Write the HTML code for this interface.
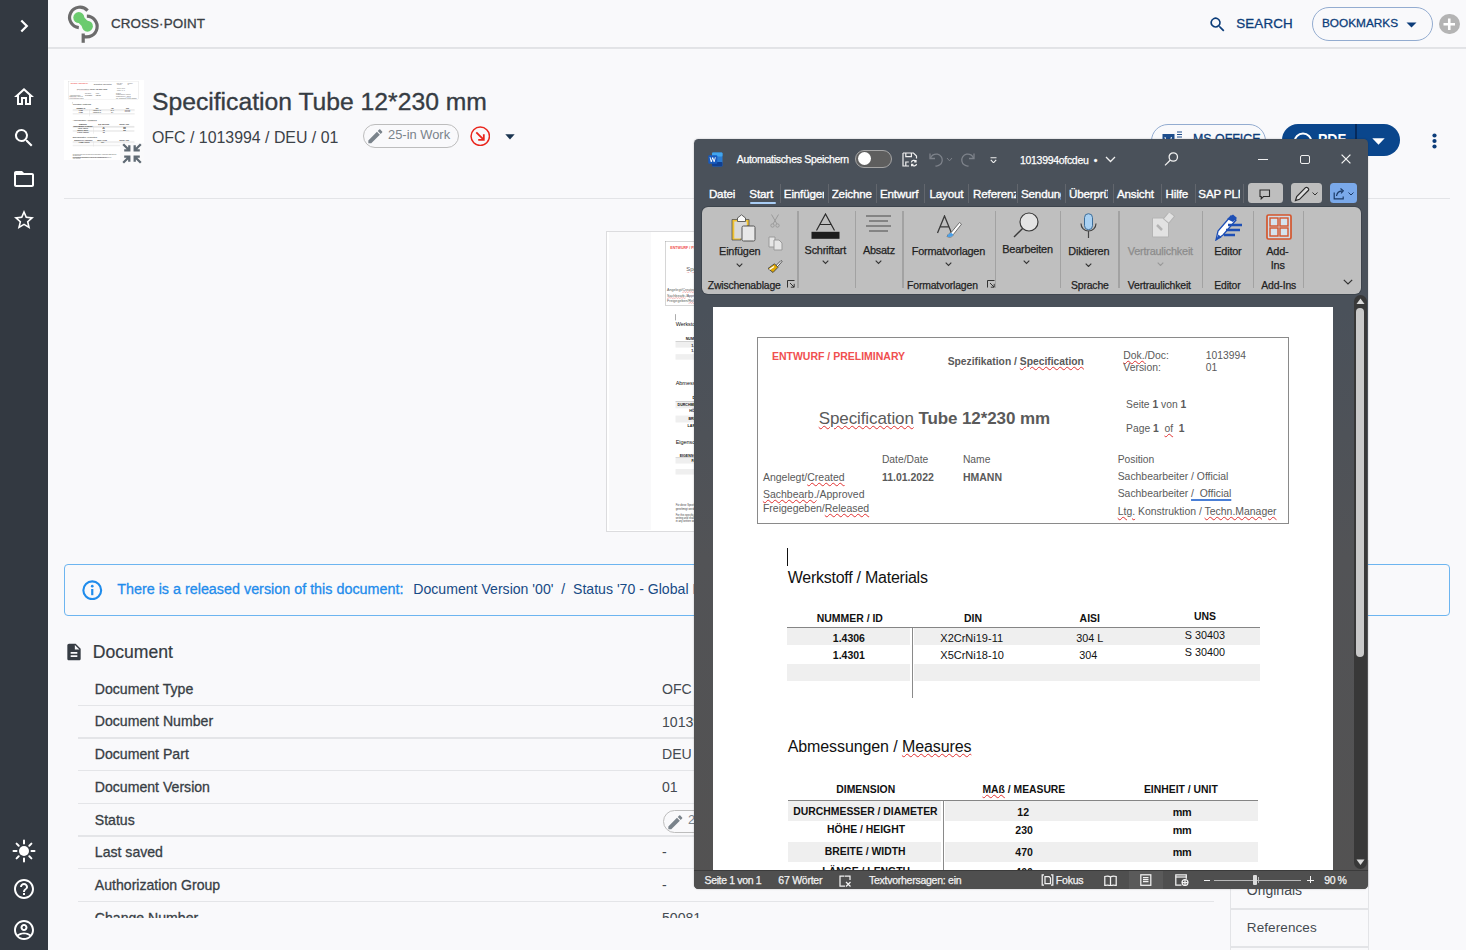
<!DOCTYPE html>
<html><head><meta charset="utf-8">
<style>
*{margin:0;padding:0;box-sizing:border-box}
html,body{width:1466px;height:950px;overflow:hidden;background:#f9f9fb;font-family:"Liberation Sans",sans-serif;color:#383e45}
.abs{position:absolute}
#side{position:absolute;left:0;top:0;width:48px;height:950px;background:#333941}
#side svg{position:absolute;left:12px;width:24px;height:24px;fill:#fff}
#hdr{position:absolute;left:48px;top:0;width:1418px;height:48px;border-bottom:1px solid #e2e3e6}
.t{position:absolute;white-space:nowrap;line-height:1}
.sq{text-decoration:underline wavy #e03030;text-decoration-thickness:1px;text-underline-offset:1px}
.bq{text-decoration:underline #4a7fd6;text-decoration-thickness:1.5px;text-underline-offset:2px}
.tab{top:48px;font-size:12px;color:#fff;overflow:hidden}
.tsep{position:absolute;top:44px;width:1px;height:20px;background:#676b72}
</style></head><body>
<div id="side">
  <svg style="top:13.8px" viewBox="0 0 24 24"><path d="M9.3 17.5 14.8 12 9.3 6.5" fill="none" stroke="#fff" stroke-width="2.2"/></svg>
  <svg style="top:85px" viewBox="0 0 24 24"><path d="M12 3 2 12h3v8h6v-6h2v6h6v-8h3L12 3zm5 15h-2v-6H9v6H7v-7.8l5-4.5 5 4.5V18z"/></svg>
  <svg style="top:126px" viewBox="0 0 24 24"><path d="M15.5 14h-.8l-.3-.3A6.5 6.5 0 1 0 9.5 16a6.5 6.5 0 0 0 4.2-1.6l.3.3v.8l5 5 1.5-1.5-5-5zm-6 0C7 14 5 12 5 9.5S7 5 9.5 5 14 7 14 9.5 12 14 9.5 14z"/></svg>
  <svg style="top:167px" viewBox="0 0 24 24"><path d="M20 6h-8l-2-2H4c-1.1 0-2 .9-2 2v12c0 1.1.9 2 2 2h16c1.1 0 2-.9 2-2V8c0-1.1-.9-2-2-2zm0 12H4V8h16v10z"/></svg>
  <svg style="top:208px" viewBox="0 0 24 24"><path d="M22 9.2l-7.2-.6L12 2 9.2 8.6 2 9.2l5.5 4.7L5.8 21 12 17.3l6.2 3.7-1.6-7.1L22 9.2zM12 15.4l-3.8 2.3 1-4.3-3.3-2.9 4.4-.4L12 6.1l1.7 4 4.4.4-3.3 2.9 1 4.3-3.8-2.3z"/></svg>
  <svg style="top:839px" viewBox="0 0 24 24"><circle cx="12" cy="12" r="5"/><path d="M12 1.5v3M12 19.5v3M1.5 12h3M19.5 12h3M4.6 4.6l2.1 2.1M17.3 17.3l2.1 2.1M4.6 19.4l2.1-2.1M17.3 6.7l2.1-2.1" stroke="#fff" stroke-width="2" stroke-linecap="round"/></svg>
  <svg style="top:877px" viewBox="0 0 24 24"><path d="M11 18h2v-2h-2v2zm1-16C6.5 2 2 6.5 2 12s4.5 10 10 10 10-4.5 10-10S17.5 2 12 2zm0 18c-4.4 0-8-3.6-8-8s3.6-8 8-8 8 3.6 8 8-3.6 8-8 8zm0-14c-2.2 0-4 1.8-4 4h2c0-1.1.9-2 2-2s2 .9 2 2c0 2-3 1.8-3 5h2c0-2.3 3-2.5 3-5 0-2.2-1.8-4-4-4z"/></svg>
  <svg style="top:918px" viewBox="0 0 24 24"><path d="M12 2C6.5 2 2 6.5 2 12s4.5 10 10 10 10-4.5 10-10S17.5 2 12 2zm0 2c4.4 0 8 3.6 8 8 0 1.7-.5 3.2-1.4 4.5C16.9 15.2 14.6 14.5 12 14.5s-4.9.7-6.6 2C4.5 15.2 4 13.7 4 12c0-4.4 3.6-8 8-8zm0 16c-2.1 0-4-.8-5.4-2.1 1.4-1.1 3.3-1.6 5.4-1.6s4 .5 5.4 1.6C16 19.2 14.1 20 12 20zm0-14c-1.9 0-3.5 1.6-3.5 3.5S10.1 13 12 13s3.5-1.6 3.5-3.5S13.9 6 12 6zm0 5c-.8 0-1.5-.7-1.5-1.5S11.2 8 12 8s1.5.7 1.5 1.5S12.8 11 12 11z"/></svg>
</div>

<div id="hdr"></div>
<div class="abs" style="left:48.0px;top:48.0px;width:1418.0px;height:1.0px;background:#e3e4e7"></div>
<svg class="abs" style="left:62.0px;top:2.0px" width="44" height="44" viewBox="0 0 44 44"><g fill="none" stroke="#6c6c6c" stroke-width="3.2"><path d="M25.6 8.6 A10.3 10.3 0 1 0 16.8 25.7"/><path d="M24.85 14.1 A10.4 10.4 0 1 1 21 34.2"/><path d="M21.2 31.5 V40.8"/></g><g fill="#6bcb6f"><circle cx="16.8" cy="15.6" r="5.5"/><circle cx="25.4" cy="24.2" r="5.5"/></g><path d="M16.8 15.6 L25.4 24.2" stroke="#6bcb6f" stroke-width="7.8"/></svg>
<div class="t" style="left:111.0px;top:16.5px;font-size:13.4px;font-weight:normal;color:#3a3f45;-webkit-text-stroke:0.3px currentColor;letter-spacing:0.1px">CROSS·POINT</div>
<svg class="abs" style="left:1207.6px;top:14.6px" width="19.2" height="19.2" viewBox="0 0 24 24"><path fill="#0c3d7a" d="M15.5 14h-.8l-.3-.3A6.5 6.5 0 1 0 9.5 16a6.5 6.5 0 0 0 4.2-1.6l.3.3v.8l5 5 1.5-1.5-5-5zm-6 0C7 14 5 12 5 9.5S7 5 9.5 5 14 7 14 9.5 12 14 9.5 14z"/></svg>
<div class="t" style="left:1236.3px;top:16.6px;font-size:13.4px;font-weight:normal;color:#0c3d7a;-webkit-text-stroke:0.3px currentColor;letter-spacing:0.1px">SEARCH</div>
<div class="abs" style="left:1312.0px;top:7.3px;width:120.5px;height:34.0px;border:1.1px solid #93acd0;border-radius:17px"></div>
<div class="t" style="left:1322.0px;top:18.0px;font-size:11.8px;font-weight:normal;color:#0c3d7a;-webkit-text-stroke:0.3px currentColor;">BOOKMARKS</div>
<svg class="abs" style="left:1405.5px;top:21.5px" width="11" height="6" viewBox="0 0 11 6"><path d="M.5 .5h10L5.5 5.5z" fill="#0c3d7a"/></svg>
<div class="abs" style="left:1439.0px;top:13.8px;width:20.5px;height:20.5px;border-radius:50%;background:#b4b4b4"></div>
<svg class="abs" style="left:1439.0px;top:13.8px" width="20.5" height="20.5" viewBox="0 0 20.5 20.5"><path d="M10.25 4.5v11.5M4.5 10.25h11.5" stroke="#fff" stroke-width="2.6"/></svg>
<div class="abs" style="left:64.0px;top:80.0px;width:80.0px;height:80.0px;background:#fff"></div>
<div class="abs" style="left:64px;top:80px;width:80px;height:80px;overflow:hidden"><div class="abs" style="left:-0.9px;top:-0.8px;width:620px;height:900px;transform-origin:0 0;transform:scale(0.131,0.0953)"><div class="abs" style="left:44.0px;top:29.8px;width:531.5px;height:187.0px;border:1px solid #8a8a8a"></div>
<div class="t" style="left:58.6px;top:43.4px;font-size:10.5px;font-weight:bold;color:#f0504f;">ENTWURF / PRELIMINARY</div>
<div class="t" style="left:234.4px;top:49.5px;font-size:10.3px;font-weight:bold;color:#5a5a5a;">Spezifikation / <span class="sq">Specification</span></div>
<div class="t" style="left:410.0px;top:43.4px;font-size:10.4px;font-weight:normal;color:#5a5a5a;"><span class="sq">Dok.</span>/Doc:</div>
<div class="t" style="left:410.0px;top:56.0px;font-size:10.4px;font-weight:normal;color:#5a5a5a;">Version:</div>
<div class="t" style="left:492.5px;top:43.5px;font-size:10.3px;font-weight:normal;color:#5a5a5a;">1013994</div>
<div class="t" style="left:492.5px;top:56.1px;font-size:10.3px;font-weight:normal;color:#5a5a5a;">01</div>
<div class="t" style="left:105.4px;top:103.0px;font-size:17px;font-weight:normal;color:#5a5a5a;letter-spacing:-0.1px"><span class="sq">Specification</span> <b>Tube 12*230 mm</b></div>
<div class="t" style="left:412.8px;top:92.5px;font-size:10.3px;font-weight:normal;color:#5a5a5a;">Seite <b>1</b> von <b>1</b></div>
<div class="t" style="left:412.8px;top:116.6px;font-size:10.3px;font-weight:normal;color:#5a5a5a;">Page <b>1</b> &nbsp;<span class="sq">of</span> &nbsp;<b>1</b></div>
<div class="t" style="left:168.6px;top:147.7px;font-size:10.3px;font-weight:normal;color:#5a5a5a;">Date/Date</div>
<div class="t" style="left:249.6px;top:147.7px;font-size:10.3px;font-weight:normal;color:#5a5a5a;">Name</div>
<div class="t" style="left:404.4px;top:147.7px;font-size:10.3px;font-weight:normal;color:#5a5a5a;">Position</div>
<div class="t" style="left:49.6px;top:164.7px;font-size:10.5px;font-weight:normal;color:#5a5a5a;">Angelegt/<span class="sq">Created</span></div>
<div class="t" style="left:168.6px;top:164.7px;font-size:10.5px;font-weight:bold;color:#5a5a5a;">11.01.2022</div>
<div class="t" style="left:249.6px;top:164.7px;font-size:10.5px;font-weight:bold;color:#5a5a5a;">HMANN</div>
<div class="t" style="left:404.4px;top:164.7px;font-size:10.4px;font-weight:normal;color:#5a5a5a;">Sachbearbeiter / Official</div>
<div class="t" style="left:49.6px;top:181.8px;font-size:10.5px;font-weight:normal;color:#5a5a5a;"><span class="sq">Sachbearb.</span>/Approved</div>
<div class="t" style="left:404.4px;top:181.8px;font-size:10.4px;font-weight:normal;color:#5a5a5a;">Sachbearbeiter <span class="bq">/ &nbsp;Official</span></div>
<div class="t" style="left:49.6px;top:196.0px;font-size:10.5px;font-weight:normal;color:#5a5a5a;">Freigegeben/<span class="sq">Released</span></div>
<div class="t" style="left:404.4px;top:200.2px;font-size:10.45px;font-weight:normal;color:#5a5a5a;"><span class="sq">Ltg.</span> Konstruktion / <span class="sq">Techn.Manager</span></div>
<div class="abs" style="left:73.8px;top:240.6px;width:1.3px;height:18.6px;background:#111"></div>
<div class="t" style="left:74.4px;top:262.4px;font-size:16px;font-weight:normal;color:#111;letter-spacing:-0.25px">Werkstoff / Materials</div>
<div class="t" style="left:103.5px;top:306.7px;font-size:10.45px;font-weight:bold;color:#111;">NUMMER / ID</div>
<div class="t" style="left:250.7px;top:306.7px;font-size:10.45px;font-weight:bold;color:#111;">DIN</div>
<div class="t" style="left:366.3px;top:306.7px;font-size:10.45px;font-weight:bold;color:#111;">AISI</div>
<div class="t" style="left:480.6px;top:304.5px;font-size:10.45px;font-weight:bold;color:#111;">UNS</div>
<div class="abs" style="left:73.8px;top:321.3px;width:123.0px;height:16.6px;background:#efefef"></div>
<div class="abs" style="left:201.2px;top:321.3px;width:345.7px;height:16.6px;background:#efefef"></div>
<div class="abs" style="left:73.8px;top:356.8px;width:123.0px;height:16.6px;background:#efefef"></div>
<div class="abs" style="left:201.2px;top:356.8px;width:345.7px;height:16.6px;background:#efefef"></div>
<div class="abs" style="left:73.8px;top:320.0px;width:473.2px;height:1.3px;background:#858585"></div>
<div class="abs" style="left:198.5px;top:320.5px;width:1.3px;height:70.0px;background:#8a8a8a"></div>
<div class="t" style="left:119.5px;top:325.9px;font-size:10.5px;font-weight:bold;color:#111;">1.4306</div>
<div class="t" style="left:227.0px;top:325.8px;font-size:11px;font-weight:normal;color:#111;">X2CrNi19-11</div>
<div class="t" style="left:363.0px;top:325.9px;font-size:10.8px;font-weight:normal;color:#111;">304 L</div>
<div class="t" style="left:471.5px;top:322.7px;font-size:10.8px;font-weight:normal;color:#111;">S 30403</div>
<div class="t" style="left:119.5px;top:342.9px;font-size:10.5px;font-weight:bold;color:#111;">1.4301</div>
<div class="t" style="left:227.0px;top:342.8px;font-size:11px;font-weight:normal;color:#111;">X5CrNi18-10</div>
<div class="t" style="left:366.0px;top:342.9px;font-size:10.8px;font-weight:normal;color:#111;">304</div>
<div class="t" style="left:471.5px;top:339.7px;font-size:10.8px;font-weight:normal;color:#111;">S 30400</div>
<div class="t" style="left:74.4px;top:431.7px;font-size:16px;font-weight:normal;color:#111;letter-spacing:-0.1px">Abmessungen / <span class="sq">Measures</span></div>
<div class="t" style="left:123.0px;top:477.5px;font-size:10.4px;font-weight:bold;color:#111;">DIMENSION</div>
<div class="t" style="left:269.2px;top:477.5px;font-size:10.35px;font-weight:bold;color:#111;"><span class="sq">MAß</span> / MEASURE</div>
<div class="t" style="left:430.6px;top:477.5px;font-size:10.4px;font-weight:bold;color:#111;">EINHEIT / UNIT</div>
<div class="abs" style="left:74.4px;top:494.3px;width:153.6px;height:19.6px;background:#efefef"></div>
<div class="abs" style="left:232.2px;top:494.3px;width:313.0px;height:19.6px;background:#efefef"></div>
<div class="abs" style="left:74.4px;top:534.7px;width:153.6px;height:19.9px;background:#efefef"></div>
<div class="abs" style="left:232.2px;top:534.7px;width:313.0px;height:19.9px;background:#efefef"></div>
<div class="abs" style="left:74.4px;top:492.6px;width:470.6px;height:1.3px;background:#858585"></div>
<div class="abs" style="left:229.9px;top:493.2px;width:1.3px;height:80.0px;background:#8a8a8a"></div>
<div class="t" style="left:80.0px;top:499.8px;font-size:10.4px;font-weight:bold;color:#111;">DURCHMESSER / DIAMETER</div>
<div class="t" style="left:304.0px;top:499.8px;font-size:10.5px;font-weight:bold;color:#111;">12</div>
<div class="t" style="left:459.4px;top:499.8px;font-size:10.8px;font-weight:bold;color:#111;letter-spacing:-0.2px">mm</div>
<div class="t" style="left:113.8px;top:518.2px;font-size:10.4px;font-weight:bold;color:#111;">HÖHE / HEIGHT</div>
<div class="t" style="left:302.0px;top:518.2px;font-size:10.5px;font-weight:bold;color:#111;">230</div>
<div class="t" style="left:459.4px;top:518.2px;font-size:10.8px;font-weight:bold;color:#111;letter-spacing:-0.2px">mm</div>
<div class="t" style="left:111.5px;top:539.7px;font-size:10.4px;font-weight:bold;color:#111;">BREITE / WIDTH</div>
<div class="t" style="left:302.0px;top:539.7px;font-size:10.5px;font-weight:bold;color:#111;">470</div>
<div class="t" style="left:459.4px;top:539.7px;font-size:10.8px;font-weight:bold;color:#111;letter-spacing:-0.2px">mm</div>
<div class="t" style="left:109.0px;top:559.5px;font-size:10.4px;font-weight:bold;color:#111;">LÄNGE / LENGTH</div>
<div class="t" style="left:302.0px;top:559.5px;font-size:10.5px;font-weight:bold;color:#111;">400</div>
<div class="t" style="left:74.4px;top:604.3px;font-size:16px;font-weight:normal;color:#111;letter-spacing:-0.1px">Eigenschaften / Properties</div>
<div class="t" style="left:86.0px;top:646.2px;font-size:10.4px;font-weight:bold;color:#111;">EIGENSCHAFT / PROPERTY</div>
<div class="t" style="left:262.0px;top:646.2px;font-size:10.4px;font-weight:bold;color:#111;">WERT / VALUE</div>
<div class="t" style="left:430.6px;top:646.2px;font-size:10.4px;font-weight:bold;color:#111;">EINHEIT / UNIT</div>
<div class="abs" style="left:74.4px;top:658.0px;width:155.0px;height:16.0px;background:#efefef"></div>
<div class="abs" style="left:231.8px;top:658.0px;width:314.0px;height:16.0px;background:#efefef"></div>
<div class="abs" style="left:74.4px;top:690.0px;width:155.0px;height:16.0px;background:#efefef"></div>
<div class="abs" style="left:231.8px;top:690.0px;width:314.0px;height:16.0px;background:#efefef"></div>
<div class="abs" style="left:74.4px;top:656.5px;width:470.6px;height:1.5px;background:#909090"></div>
<div class="abs" style="left:229.7px;top:657.0px;width:1.3px;height:52.0px;background:#8a8a8a"></div>
<div class="t" style="left:120.0px;top:661.2px;font-size:10.4px;font-weight:bold;color:#111;">FARBE / COLOR</div>
<div class="t" style="left:290.0px;top:661.2px;font-size:10.5px;font-weight:normal;color:#111;">silber</div>
<div class="t" style="left:74.4px;top:791.7px;font-size:7.5px;font-weight:normal;color:#444;">Für diese Spezifikation gelten die allgemeinen Lieferbedingungen. Abweichungen müssen schriftlich</div>
<div class="t" style="left:74.4px;top:801.7px;font-size:7.5px;font-weight:normal;color:#444;">genehmigt werden.</div>
<div class="t" style="left:74.4px;top:818.7px;font-size:7.5px;font-weight:normal;color:#444;">For this specification the general terms of delivery apply. Deviations must be approved in</div>
<div class="t" style="left:74.4px;top:827.7px;font-size:7.5px;font-weight:normal;color:#444;">writing and shall not be disregarded. Any alteration of this document has to be</div>
<div class="t" style="left:74.4px;top:836.7px;font-size:7.5px;font-weight:normal;color:#444;">in any written way.</div></div></div>
<div class="abs" style="left:120.0px;top:143.0px;width:24.0px;height:23.0px;background:#fafafb"></div>
<svg class="abs" style="left:121.0px;top:142.0px" width="22" height="23" viewBox="0 0 22 23"><g stroke="#5f6a74" stroke-width="2.3" fill="none"><path d="M2.2 2.2 8 8M3.2 8.3h5.1V3.2"/><path d="M19.8 2.2 14 8M18.8 8.3h-5.1V3.2"/><path d="M2.2 20.8 8 15M3.2 14.7h5.1v5.1"/><path d="M19.8 20.8 14 15M18.8 14.7h-5.1v5.1"/></g></svg>
<div class="t" style="left:152.0px;top:89.9px;font-size:24.7px;font-weight:normal;color:#363c43;-webkit-text-stroke:0.35px currentColor">Specification Tube 12*230 mm</div>
<div class="t" style="left:152.0px;top:130.3px;font-size:15.9px;font-weight:normal;color:#3c4248;">OFC / 1013994 / DEU / 01</div>
<div class="abs" style="left:362.5px;top:124.4px;width:96.0px;height:23.4px;border:1.3px solid #bdbdbd;border-radius:12px"></div>
<svg class="abs" style="left:365.5px;top:127.3px" width="18.7" height="18.7" viewBox="0 0 24 24"><path fill="#7a838b" d="M3 17.25V21h3.75L17.8 9.94l-3.75-3.75L3 17.25zM20.7 7.04a1 1 0 0 0 0-1.41l-2.34-2.34a1 1 0 0 0-1.41 0l-1.83 1.83 3.75 3.75 1.83-1.83z"/></svg>
<div class="t" style="left:388.0px;top:128.8px;font-size:12.9px;font-weight:normal;color:#7a838b;">25-in Work</div>
<svg class="abs" style="left:469.5px;top:125.8px" width="20.5" height="20.5" viewBox="0 0 20.5 20.5"><circle cx="10.25" cy="10.25" r="9.2" fill="none" stroke="#e9261d" stroke-width="1.5"/><path d="M6.3 6.3 13.6 13.6M13.8 8.2v5.6H8.2" fill="none" stroke="#e9261d" stroke-width="1.8"/></svg>
<svg class="abs" style="left:504.5px;top:133.5px" width="10" height="6" viewBox="0 0 10 6"><path d="M.3 .3h9.4L5 5.6z" fill="#1b3550"/></svg>
<div class="abs" style="left:1151.0px;top:124.0px;width:114.5px;height:34.0px;border:1.1px solid #93acd0;border-radius:17px"></div>
<svg class="abs" style="left:1161.5px;top:130.5px" width="22" height="16" viewBox="0 0 22 16"><rect x="0.5" y="3" width="12" height="11" fill="#1d4d8c"/><path d="M3 6l1.2 6h1l1-3.5 1 3.5h1L9.4 6" stroke="#fff" stroke-width="1" fill="none"/><path d="M15 1h5M15 3.5h5M15 6h5" stroke="#1d4d8c" stroke-width="1.2"/></svg>
<div class="t" style="left:1193.0px;top:133.2px;font-size:12.4px;font-weight:normal;color:#0c3d7a;-webkit-text-stroke:0.3px currentColor;">MS OFFICE</div>
<div class="abs" style="left:1282.0px;top:124.0px;width:118.0px;height:32.0px;background:#0a468c;border-radius:16px"></div>
<div class="abs" style="left:1355.0px;top:124.0px;width:1.6px;height:32.0px;background:#062a5c"></div>
<svg class="abs" style="left:1292.0px;top:131.0px" width="22" height="22" viewBox="0 0 22 22"><circle cx="11" cy="11" r="8.5" fill="none" stroke="#fff" stroke-width="2"/></svg>
<div class="t" style="left:1318.0px;top:132.1px;font-size:14px;font-weight:bold;color:#fff;">PDF</div>
<svg class="abs" style="left:1371.5px;top:137.5px" width="13" height="7" viewBox="0 0 13 7"><path d="M.3 .3h12.4L6.5 6.8z" fill="#fff"/></svg>
<svg class="abs" style="left:1430.5px;top:132.5px" width="7" height="16" viewBox="0 0 7 16"><g fill="#0c3d7a"><circle cx="3.5" cy="2.5" r="2.1"/><circle cx="3.5" cy="8" r="2.1"/><circle cx="3.5" cy="13.5" r="2.1"/></g></svg>
<div class="abs" style="left:64.0px;top:197.6px;width:1386.0px;height:1.2px;background:#e3e4e7"></div>
<div class="abs" style="left:606.0px;top:230.5px;width:300.0px;height:301.5px;border:1.6px solid #dcdcde;background:#fff"></div>
<div class="abs" style="left:608.6px;top:232.1px;width:42.4px;height:298.4px;background:#f9f9fa"></div>
<div class="abs" style="left:650px;top:231px;width:44px;height:300px;overflow:hidden"><div class="abs" style="left:0;top:0;width:620px;height:900px;transform-origin:0 0;transform:scale(0.345)"><div class="abs" style="left:44.0px;top:29.8px;width:531.5px;height:187.0px;border:1px solid #8a8a8a"></div>
<div class="t" style="left:58.6px;top:43.4px;font-size:10.5px;font-weight:bold;color:#f0504f;">ENTWURF / PRELIMINARY</div>
<div class="t" style="left:234.4px;top:49.5px;font-size:10.3px;font-weight:bold;color:#5a5a5a;">Spezifikation / <span class="sq">Specification</span></div>
<div class="t" style="left:410.0px;top:43.4px;font-size:10.4px;font-weight:normal;color:#5a5a5a;"><span class="sq">Dok.</span>/Doc:</div>
<div class="t" style="left:410.0px;top:56.0px;font-size:10.4px;font-weight:normal;color:#5a5a5a;">Version:</div>
<div class="t" style="left:492.5px;top:43.5px;font-size:10.3px;font-weight:normal;color:#5a5a5a;">1013994</div>
<div class="t" style="left:492.5px;top:56.1px;font-size:10.3px;font-weight:normal;color:#5a5a5a;">01</div>
<div class="t" style="left:105.4px;top:103.0px;font-size:17px;font-weight:normal;color:#5a5a5a;letter-spacing:-0.1px"><span class="sq">Specification</span> <b>Tube 12*230 mm</b></div>
<div class="t" style="left:412.8px;top:92.5px;font-size:10.3px;font-weight:normal;color:#5a5a5a;">Seite <b>1</b> von <b>1</b></div>
<div class="t" style="left:412.8px;top:116.6px;font-size:10.3px;font-weight:normal;color:#5a5a5a;">Page <b>1</b> &nbsp;<span class="sq">of</span> &nbsp;<b>1</b></div>
<div class="t" style="left:168.6px;top:147.7px;font-size:10.3px;font-weight:normal;color:#5a5a5a;">Date/Date</div>
<div class="t" style="left:249.6px;top:147.7px;font-size:10.3px;font-weight:normal;color:#5a5a5a;">Name</div>
<div class="t" style="left:404.4px;top:147.7px;font-size:10.3px;font-weight:normal;color:#5a5a5a;">Position</div>
<div class="t" style="left:49.6px;top:164.7px;font-size:10.5px;font-weight:normal;color:#5a5a5a;">Angelegt/<span class="sq">Created</span></div>
<div class="t" style="left:168.6px;top:164.7px;font-size:10.5px;font-weight:bold;color:#5a5a5a;">11.01.2022</div>
<div class="t" style="left:249.6px;top:164.7px;font-size:10.5px;font-weight:bold;color:#5a5a5a;">HMANN</div>
<div class="t" style="left:404.4px;top:164.7px;font-size:10.4px;font-weight:normal;color:#5a5a5a;">Sachbearbeiter / Official</div>
<div class="t" style="left:49.6px;top:181.8px;font-size:10.5px;font-weight:normal;color:#5a5a5a;"><span class="sq">Sachbearb.</span>/Approved</div>
<div class="t" style="left:404.4px;top:181.8px;font-size:10.4px;font-weight:normal;color:#5a5a5a;">Sachbearbeiter <span class="bq">/ &nbsp;Official</span></div>
<div class="t" style="left:49.6px;top:196.0px;font-size:10.5px;font-weight:normal;color:#5a5a5a;">Freigegeben/<span class="sq">Released</span></div>
<div class="t" style="left:404.4px;top:200.2px;font-size:10.45px;font-weight:normal;color:#5a5a5a;"><span class="sq">Ltg.</span> Konstruktion / <span class="sq">Techn.Manager</span></div>
<div class="abs" style="left:73.8px;top:240.6px;width:1.3px;height:18.6px;background:#111"></div>
<div class="t" style="left:74.4px;top:262.4px;font-size:16px;font-weight:normal;color:#111;letter-spacing:-0.25px">Werkstoff / Materials</div>
<div class="t" style="left:103.5px;top:306.7px;font-size:10.45px;font-weight:bold;color:#111;">NUMMER / ID</div>
<div class="t" style="left:250.7px;top:306.7px;font-size:10.45px;font-weight:bold;color:#111;">DIN</div>
<div class="t" style="left:366.3px;top:306.7px;font-size:10.45px;font-weight:bold;color:#111;">AISI</div>
<div class="t" style="left:480.6px;top:304.5px;font-size:10.45px;font-weight:bold;color:#111;">UNS</div>
<div class="abs" style="left:73.8px;top:321.3px;width:123.0px;height:16.6px;background:#efefef"></div>
<div class="abs" style="left:201.2px;top:321.3px;width:345.7px;height:16.6px;background:#efefef"></div>
<div class="abs" style="left:73.8px;top:356.8px;width:123.0px;height:16.6px;background:#efefef"></div>
<div class="abs" style="left:201.2px;top:356.8px;width:345.7px;height:16.6px;background:#efefef"></div>
<div class="abs" style="left:73.8px;top:320.0px;width:473.2px;height:1.3px;background:#858585"></div>
<div class="abs" style="left:198.5px;top:320.5px;width:1.3px;height:70.0px;background:#8a8a8a"></div>
<div class="t" style="left:119.5px;top:325.9px;font-size:10.5px;font-weight:bold;color:#111;">1.4306</div>
<div class="t" style="left:227.0px;top:325.8px;font-size:11px;font-weight:normal;color:#111;">X2CrNi19-11</div>
<div class="t" style="left:363.0px;top:325.9px;font-size:10.8px;font-weight:normal;color:#111;">304 L</div>
<div class="t" style="left:471.5px;top:322.7px;font-size:10.8px;font-weight:normal;color:#111;">S 30403</div>
<div class="t" style="left:119.5px;top:342.9px;font-size:10.5px;font-weight:bold;color:#111;">1.4301</div>
<div class="t" style="left:227.0px;top:342.8px;font-size:11px;font-weight:normal;color:#111;">X5CrNi18-10</div>
<div class="t" style="left:366.0px;top:342.9px;font-size:10.8px;font-weight:normal;color:#111;">304</div>
<div class="t" style="left:471.5px;top:339.7px;font-size:10.8px;font-weight:normal;color:#111;">S 30400</div>
<div class="t" style="left:74.4px;top:431.7px;font-size:16px;font-weight:normal;color:#111;letter-spacing:-0.1px">Abmessungen / <span class="sq">Measures</span></div>
<div class="t" style="left:123.0px;top:477.5px;font-size:10.4px;font-weight:bold;color:#111;">DIMENSION</div>
<div class="t" style="left:269.2px;top:477.5px;font-size:10.35px;font-weight:bold;color:#111;"><span class="sq">MAß</span> / MEASURE</div>
<div class="t" style="left:430.6px;top:477.5px;font-size:10.4px;font-weight:bold;color:#111;">EINHEIT / UNIT</div>
<div class="abs" style="left:74.4px;top:494.3px;width:153.6px;height:19.6px;background:#efefef"></div>
<div class="abs" style="left:232.2px;top:494.3px;width:313.0px;height:19.6px;background:#efefef"></div>
<div class="abs" style="left:74.4px;top:534.7px;width:153.6px;height:19.9px;background:#efefef"></div>
<div class="abs" style="left:232.2px;top:534.7px;width:313.0px;height:19.9px;background:#efefef"></div>
<div class="abs" style="left:74.4px;top:492.6px;width:470.6px;height:1.3px;background:#858585"></div>
<div class="abs" style="left:229.9px;top:493.2px;width:1.3px;height:80.0px;background:#8a8a8a"></div>
<div class="t" style="left:80.0px;top:499.8px;font-size:10.4px;font-weight:bold;color:#111;">DURCHMESSER / DIAMETER</div>
<div class="t" style="left:304.0px;top:499.8px;font-size:10.5px;font-weight:bold;color:#111;">12</div>
<div class="t" style="left:459.4px;top:499.8px;font-size:10.8px;font-weight:bold;color:#111;letter-spacing:-0.2px">mm</div>
<div class="t" style="left:113.8px;top:518.2px;font-size:10.4px;font-weight:bold;color:#111;">HÖHE / HEIGHT</div>
<div class="t" style="left:302.0px;top:518.2px;font-size:10.5px;font-weight:bold;color:#111;">230</div>
<div class="t" style="left:459.4px;top:518.2px;font-size:10.8px;font-weight:bold;color:#111;letter-spacing:-0.2px">mm</div>
<div class="t" style="left:111.5px;top:539.7px;font-size:10.4px;font-weight:bold;color:#111;">BREITE / WIDTH</div>
<div class="t" style="left:302.0px;top:539.7px;font-size:10.5px;font-weight:bold;color:#111;">470</div>
<div class="t" style="left:459.4px;top:539.7px;font-size:10.8px;font-weight:bold;color:#111;letter-spacing:-0.2px">mm</div>
<div class="t" style="left:109.0px;top:559.5px;font-size:10.4px;font-weight:bold;color:#111;">LÄNGE / LENGTH</div>
<div class="t" style="left:302.0px;top:559.5px;font-size:10.5px;font-weight:bold;color:#111;">400</div>
<div class="t" style="left:74.4px;top:604.3px;font-size:16px;font-weight:normal;color:#111;letter-spacing:-0.1px">Eigenschaften / Properties</div>
<div class="t" style="left:86.0px;top:646.2px;font-size:10.4px;font-weight:bold;color:#111;">EIGENSCHAFT / PROPERTY</div>
<div class="t" style="left:262.0px;top:646.2px;font-size:10.4px;font-weight:bold;color:#111;">WERT / VALUE</div>
<div class="t" style="left:430.6px;top:646.2px;font-size:10.4px;font-weight:bold;color:#111;">EINHEIT / UNIT</div>
<div class="abs" style="left:74.4px;top:658.0px;width:155.0px;height:16.0px;background:#efefef"></div>
<div class="abs" style="left:231.8px;top:658.0px;width:314.0px;height:16.0px;background:#efefef"></div>
<div class="abs" style="left:74.4px;top:690.0px;width:155.0px;height:16.0px;background:#efefef"></div>
<div class="abs" style="left:231.8px;top:690.0px;width:314.0px;height:16.0px;background:#efefef"></div>
<div class="abs" style="left:74.4px;top:656.5px;width:470.6px;height:1.5px;background:#909090"></div>
<div class="abs" style="left:229.7px;top:657.0px;width:1.3px;height:52.0px;background:#8a8a8a"></div>
<div class="t" style="left:120.0px;top:661.2px;font-size:10.4px;font-weight:bold;color:#111;">FARBE / COLOR</div>
<div class="t" style="left:290.0px;top:661.2px;font-size:10.5px;font-weight:normal;color:#111;">silber</div>
<div class="t" style="left:74.4px;top:791.7px;font-size:7.5px;font-weight:normal;color:#444;">Für diese Spezifikation gelten die allgemeinen Lieferbedingungen. Abweichungen müssen schriftlich</div>
<div class="t" style="left:74.4px;top:801.7px;font-size:7.5px;font-weight:normal;color:#444;">genehmigt werden.</div>
<div class="t" style="left:74.4px;top:818.7px;font-size:7.5px;font-weight:normal;color:#444;">For this specification the general terms of delivery apply. Deviations must be approved in</div>
<div class="t" style="left:74.4px;top:827.7px;font-size:7.5px;font-weight:normal;color:#444;">writing and shall not be disregarded. Any alteration of this document has to be</div>
<div class="t" style="left:74.4px;top:836.7px;font-size:7.5px;font-weight:normal;color:#444;">in any written way.</div></div></div>
<div class="abs" style="left:64.0px;top:564.2px;width:1385.5px;height:51.5px;border:1.8px solid #6db5f0;border-radius:4px"></div>
<svg class="abs" style="left:82.3px;top:579.9px" width="20.5" height="20.5" viewBox="0 0 20.5 20.5"><circle cx="10.25" cy="10.25" r="8.9" fill="none" stroke="#1f8cec" stroke-width="2.1"/><path d="M10.25 9v6.2" stroke="#1f8cec" stroke-width="2.2"/><circle cx="10.25" cy="6.2" r="1.35" fill="#1f8cec"/></svg>
<div class="t" style="left:117.2px;top:582.0px;font-size:14.35px;font-weight:normal;color:#1f8cec;-webkit-text-stroke:0.3px currentColor;">There is a released version of this document:</div>
<div class="t" style="left:413.3px;top:581.6px;font-size:14.1px;font-weight:normal;color:#174a85;">Document Version '00' &nbsp;/&nbsp; Status '70 - Global Released'</div>
<svg class="abs" style="left:64.2px;top:641.8px" width="20" height="20" viewBox="0 0 24 24"><path fill="#363c43" d="M14 2H6c-1.1 0-2 .9-2 2v16c0 1.1.9 2 2 2h12c1.1 0 2-.9 2-2V8l-6-6zm2 16H8v-2h8v2zm0-4H8v-2h8v2zm-3-5V3.5L18.5 9H13z"/></svg>
<div class="t" style="left:92.7px;top:644.2px;font-size:17.6px;font-weight:normal;color:#363c43;-webkit-text-stroke:0.2px currentColor">Document</div>
<div class="abs" style="left:0;top:0;width:1466px;height:918px;overflow:hidden">
<div class="t" style="left:94.8px;top:681.7px;font-size:14.1px;font-weight:normal;color:#383e45;-webkit-text-stroke:0.3px currentColor;">Document Type</div>
<div class="t" style="left:662.0px;top:681.9px;font-size:14.1px;font-weight:normal;color:#444a51;">OFC</div>
<div class="abs" style="left:78.2px;top:704.7px;width:1136.0px;height:1.4px;background:#e4e5e8"></div>
<div class="t" style="left:94.8px;top:714.4px;font-size:14.1px;font-weight:normal;color:#383e45;-webkit-text-stroke:0.3px currentColor;">Document Number</div>
<div class="t" style="left:662.0px;top:714.6px;font-size:14.1px;font-weight:normal;color:#444a51;">1013994</div>
<div class="abs" style="left:78.2px;top:737.4px;width:1136.0px;height:1.4px;background:#e4e5e8"></div>
<div class="t" style="left:94.8px;top:747.1px;font-size:14.1px;font-weight:normal;color:#383e45;-webkit-text-stroke:0.3px currentColor;">Document Part</div>
<div class="t" style="left:662.0px;top:747.3px;font-size:14.1px;font-weight:normal;color:#444a51;">DEU</div>
<div class="abs" style="left:78.2px;top:770.1px;width:1136.0px;height:1.4px;background:#e4e5e8"></div>
<div class="t" style="left:94.8px;top:779.8px;font-size:14.1px;font-weight:normal;color:#383e45;-webkit-text-stroke:0.3px currentColor;">Document Version</div>
<div class="t" style="left:662.0px;top:780.0px;font-size:14.1px;font-weight:normal;color:#444a51;">01</div>
<div class="abs" style="left:78.2px;top:802.7px;width:1136.0px;height:1.4px;background:#e4e5e8"></div>
<div class="t" style="left:94.8px;top:812.5px;font-size:14.1px;font-weight:normal;color:#383e45;-webkit-text-stroke:0.3px currentColor;">Status</div>
<div class="abs" style="left:662.5px;top:809.7px;width:80.0px;height:23.4px;border:1.3px solid #bdbdbd;border-radius:12px"></div>
<svg class="abs" style="left:665.5px;top:812.6px" width="18.7" height="18.7" viewBox="0 0 24 24"><path fill="#7a838b" d="M3 17.25V21h3.75L17.8 9.94l-3.75-3.75L3 17.25zM20.7 7.04a1 1 0 0 0 0-1.41l-2.34-2.34a1 1 0 0 0-1.41 0l-1.83 1.83 3.75 3.75 1.83-1.83z"/></svg>
<div class="t" style="left:688.0px;top:814.1px;font-size:12.9px;font-weight:normal;color:#7a838b;">25-in Work</div>
<div class="abs" style="left:78.2px;top:835.4px;width:1136.0px;height:1.4px;background:#e4e5e8"></div>
<div class="t" style="left:94.8px;top:845.1px;font-size:14.1px;font-weight:normal;color:#383e45;-webkit-text-stroke:0.3px currentColor;">Last saved</div>
<div class="t" style="left:662.0px;top:845.3px;font-size:14.1px;font-weight:normal;color:#444a51;">-</div>
<div class="abs" style="left:78.2px;top:868.1px;width:1136.0px;height:1.4px;background:#e4e5e8"></div>
<div class="t" style="left:94.8px;top:877.8px;font-size:14.1px;font-weight:normal;color:#383e45;-webkit-text-stroke:0.3px currentColor;">Authorization Group</div>
<div class="t" style="left:662.0px;top:878.0px;font-size:14.1px;font-weight:normal;color:#444a51;">-</div>
<div class="abs" style="left:78.2px;top:900.8px;width:1136.0px;height:1.4px;background:#e4e5e8"></div>
<div class="t" style="left:94.8px;top:910.5px;font-size:14.1px;font-weight:normal;color:#383e45;-webkit-text-stroke:0.3px currentColor;">Change Number</div>
<div class="t" style="left:662.0px;top:910.7px;font-size:14.1px;font-weight:normal;color:#444a51;">50081</div>
</div>
<div class="abs" style="left:1230.3px;top:860.0px;width:1.2px;height:90.0px;background:#e3e4e7"></div>
<div class="abs" style="left:1367.8px;top:860.0px;width:1.2px;height:90.0px;background:#e3e4e7"></div>
<div class="abs" style="left:1230.3px;top:908.2px;width:138.0px;height:1.5px;background:#e3e4e7"></div>
<div class="abs" style="left:1230.3px;top:946.3px;width:138.0px;height:1.5px;background:#e3e4e7"></div>
<div class="t" style="left:1246.8px;top:882.8px;font-size:14px;font-weight:normal;color:#444a50;">Originals</div>
<div class="t" style="left:1246.8px;top:921.0px;font-size:13.5px;font-weight:normal;color:#444a50;letter-spacing:0.1px">References</div>
<div class="abs" style="left:694.3px;top:139.2px;width:673.4px;height:750px;border-radius:4.5px;background:linear-gradient(#4a515a 0px,#4a515a 170px,#525356 420px,#535252 750px);overflow:hidden;box-shadow:0 0 2px rgba(0,0,0,.25)"></div>
<div class="abs" id="wwin" style="left:694.3px;top:139.2px;width:673.4px;height:750px;border-radius:4.5px;overflow:hidden">
<svg class="abs" style="left:14.0px;top:12.5px;" width="15" height="15" viewBox="0 0 15 15"><rect x="4" y="0.5" width="10.5" height="14" rx="1.2" fill="#2b7cd3"/><rect x="4" y="0.5" width="10.5" height="4" rx="1" fill="#41a5ee"/><rect x="4" y="10" width="10.5" height="4.5" rx="1" fill="#103f91"/><rect x="0.3" y="3.3" width="9" height="8.5" rx="1" fill="#185abd"/><path d="M1.6 5.3l1.2 4.6h.9l1-3.2 1 3.2h.9l1.2-4.6h-.9l-.8 3.2-1-3.2h-.8l-1 3.2-.8-3.2z" fill="#fff"/></svg>
<div class="t" style="left:42.4px;top:15.2px;font-size:10.5px;font-weight:normal;color:#fff;-webkit-text-stroke:0.25px currentColor;letter-spacing:-0.3px">Automatisches Speichern</div>
<div class="abs" style="left:161.0px;top:10.8px;width:36.6px;height:18.0px;border-radius:9px;border:1.6px solid #a5a5a5;background:#5e5e5e"></div>
<div class="abs" style="left:163.5px;top:13.2px;width:13.0px;height:13.0px;border-radius:50%;background:#fff"></div>
<svg class="abs" style="left:207.5px;top:12.5px;" width="16" height="15" viewBox="0 0 16 15"><g fill="none" stroke="#f0f0f0" stroke-width="1.2"><path d="M1 1h10.5l3 3v2.5M1 1v13h6"/><path d="M3.8 1v3.6h5.6V1M3.8 14v-4h3"/><path d="M9.3 10.3a2.6 2.6 0 0 1 4.6-.9M14 8v1.8h-1.8M14.6 12a2.6 2.6 0 0 1-4.6.9M9.6 14.2v-1.8h1.8"/></g></svg>
<svg class="abs" style="left:233.5px;top:12.5px;" width="15" height="15" viewBox="0 0 15 15"><g fill="none" stroke="#7d828a" stroke-width="1.3"><path d="M2 1.5v5h5"/><path d="M2.4 6.5A6 6 0 1 1 7.5 14"/></g></svg>
<svg class="abs" style="left:251.5px;top:17.5px;" width="7" height="5" viewBox="0 0 7 5"><path d="M1 1l2.5 2.8L6 1" fill="none" stroke="#7d828a" stroke-width="1"/></svg>
<svg class="abs" style="left:266.0px;top:12.5px;" width="16" height="15" viewBox="0 0 16 15"><g fill="none" stroke="#7d828a" stroke-width="1.3"><path d="M14 1.5v5H9"/><path d="M13.6 6.5A6 6 0 1 0 8.5 14"/></g></svg>
<svg class="abs" style="left:296.0px;top:17.5px;" width="7" height="6.5" viewBox="0 0 7 6.5"><g fill="none" stroke="#f0f0f0" stroke-width="1.1"><path d="M0.5 0.8h6M0.8 2.8l2.7 3L6.2 2.8"/></g></svg>
<div class="t" style="left:325.7px;top:15.6px;font-size:10.5px;font-weight:normal;color:#fff;-webkit-text-stroke:0.25px currentColor;letter-spacing:-0.3px">1013994ofcdeu &nbsp;•</div>
<svg class="abs" style="left:410.5px;top:16.5px;" width="11" height="7" viewBox="0 0 11 7"><path d="M1 1l4.5 4.5L10 1" fill="none" stroke="#f0f0f0" stroke-width="1.3"/></svg>
<svg class="abs" style="left:470.0px;top:13.2px;" width="15" height="14" viewBox="0 0 15 14"><g fill="none" stroke="#f0f0f0" stroke-width="1.3"><circle cx="9.3" cy="5" r="4.2"/><path d="M6.4 8 1 13.4"/></g></svg>
<div class="abs" style="left:564.0px;top:20.0px;width:9.5px;height:1.3px;background:#f0f0f0"></div>
<div class="abs" style="left:606.0px;top:15.5px;width:9.5px;height:9.5px;border:1.3px solid #f0f0f0;border-radius:2px"></div>
<svg class="abs" style="left:647.0px;top:14.7px;" width="10" height="10" viewBox="0 0 10 10"><path d="M.6 .6l8.8 8.8M9.4 .6L.6 9.4" stroke="#f0f0f0" stroke-width="1.3"/></svg>
<div class="t" style="left:14.6px;top:49.0px;font-size:11.6px;font-weight:normal;color:#fff;-webkit-text-stroke:0.25px currentColor;letter-spacing:-0.15px;-webkit-text-stroke:0.35px #fff;">Datei</div>
<div class="t" style="left:55.0px;top:49.0px;font-size:11.6px;font-weight:normal;color:#fff;-webkit-text-stroke:0.25px currentColor;letter-spacing:-0.15px;-webkit-text-stroke:0.35px #fff;">Start</div>
<div class="t" style="left:89.5px;top:49.0px;font-size:11.6px;font-weight:normal;color:#fff;-webkit-text-stroke:0.25px currentColor;letter-spacing:-0.15px;width:40.5px;overflow:hidden;-webkit-text-stroke:0.35px #fff;">Einfügen</div>
<div class="t" style="left:137.4px;top:49.0px;font-size:11.6px;font-weight:normal;color:#fff;-webkit-text-stroke:0.25px currentColor;letter-spacing:-0.15px;width:40.5px;overflow:hidden;-webkit-text-stroke:0.35px #fff;">Zeichnen</div>
<div class="t" style="left:185.7px;top:49.0px;font-size:11.6px;font-weight:normal;color:#fff;-webkit-text-stroke:0.25px currentColor;letter-spacing:-0.15px;-webkit-text-stroke:0.35px #fff;">Entwurf</div>
<div class="t" style="left:235.2px;top:49.0px;font-size:11.6px;font-weight:normal;color:#fff;-webkit-text-stroke:0.25px currentColor;letter-spacing:-0.15px;-webkit-text-stroke:0.35px #fff;">Layout</div>
<div class="t" style="left:278.8px;top:49.0px;font-size:11.6px;font-weight:normal;color:#fff;-webkit-text-stroke:0.25px currentColor;letter-spacing:-0.15px;width:43px;overflow:hidden;-webkit-text-stroke:0.35px #fff;">Referenzen</div>
<div class="t" style="left:326.7px;top:49.0px;font-size:11.6px;font-weight:normal;color:#fff;-webkit-text-stroke:0.25px currentColor;letter-spacing:-0.15px;width:40.5px;overflow:hidden;-webkit-text-stroke:0.35px #fff;">Sendungen</div>
<div class="t" style="left:374.7px;top:49.0px;font-size:11.6px;font-weight:normal;color:#fff;-webkit-text-stroke:0.25px currentColor;letter-spacing:-0.15px;width:39.5px;overflow:hidden;-webkit-text-stroke:0.35px #fff;">Überprüfen</div>
<div class="t" style="left:422.6px;top:49.0px;font-size:11.6px;font-weight:normal;color:#fff;-webkit-text-stroke:0.25px currentColor;letter-spacing:-0.15px;-webkit-text-stroke:0.35px #fff;">Ansicht</div>
<div class="t" style="left:471.3px;top:49.0px;font-size:11.6px;font-weight:normal;color:#fff;-webkit-text-stroke:0.25px currentColor;letter-spacing:-0.15px;-webkit-text-stroke:0.35px #fff;">Hilfe</div>
<div class="t" style="left:504.0px;top:49.0px;font-size:11.6px;font-weight:normal;color:#fff;-webkit-text-stroke:0.25px currentColor;letter-spacing:-0.15px;width:42px;overflow:hidden;-webkit-text-stroke:0.35px #fff;">SAP PLM</div>
<div class="abs" style="left:85.4px;top:44.5px;width:1.0px;height:19.0px;background:#62666d"></div>
<div class="abs" style="left:133.3px;top:44.5px;width:1.0px;height:19.0px;background:#62666d"></div>
<div class="abs" style="left:181.6px;top:44.5px;width:1.0px;height:19.0px;background:#62666d"></div>
<div class="abs" style="left:229.7px;top:44.5px;width:1.0px;height:19.0px;background:#62666d"></div>
<div class="abs" style="left:274.0px;top:44.5px;width:1.0px;height:19.0px;background:#62666d"></div>
<div class="abs" style="left:323.0px;top:44.5px;width:1.0px;height:19.0px;background:#62666d"></div>
<div class="abs" style="left:371.0px;top:44.5px;width:1.0px;height:19.0px;background:#62666d"></div>
<div class="abs" style="left:419.0px;top:44.5px;width:1.0px;height:19.0px;background:#62666d"></div>
<div class="abs" style="left:466.8px;top:44.5px;width:1.0px;height:19.0px;background:#62666d"></div>
<div class="abs" style="left:500.3px;top:44.5px;width:1.0px;height:19.0px;background:#62666d"></div>
<div class="abs" style="left:548.3px;top:44.5px;width:1.0px;height:19.0px;background:#62666d"></div>
<div class="abs" style="left:55.5px;top:63.0px;width:26.0px;height:2.0px;background:#a9cdf5;border-radius:1px"></div>
<div class="abs" style="left:553.3px;top:43.9px;width:35.4px;height:20.2px;background:#bebebe;border-radius:3.5px"></div>
<svg class="abs" style="left:565.0px;top:49.5px;" width="12" height="11" viewBox="0 0 12 11"><path d="M1 1h9.5v6.5H4.5L2.2 9.8V7.5H1z" fill="none" stroke="#2a2a2a" stroke-width="1.1"/></svg>
<div class="abs" style="left:596.8px;top:43.9px;width:31.0px;height:20.2px;background:#bebebe;border-radius:3.5px"></div>
<svg class="abs" style="left:600.0px;top:46.5px;" width="16" height="16" viewBox="0 0 16 16"><path d="M1.5 14.5l1.2-4L11.5 1.7a1.4 1.4 0 0 1 2 0l.8.8a1.4 1.4 0 0 1 0 2L5.5 13.3z" fill="#dcdcdc" stroke="#2a2a2a" stroke-width="1.2"/></svg>
<svg class="abs" style="left:617.5px;top:52.5px;" width="6" height="4" viewBox="0 0 6 4"><path d="M.5 .5l2.5 2.5L5.5 .5" fill="none" stroke="#333" stroke-width="1"/></svg>
<div class="abs" style="left:635.4px;top:43.9px;width:27.7px;height:20.2px;background:#7aa9ea;border-radius:3.5px"></div>
<svg class="abs" style="left:638.5px;top:47.0px;" width="13" height="14" viewBox="0 0 13 14"><g fill="none" stroke="#1b3a66" stroke-width="1.2"><path d="M1.2 6.5v6.3h9V10.5"/><path d="M3.5 10c.5-3 2.5-5 5.5-5.2M7.5 2.5l2.8 2.3-2.3 2.5"/></g></svg>
<svg class="abs" style="left:653.5px;top:52.5px;" width="6" height="4" viewBox="0 0 6 4"><path d="M.5 .5l2.5 2.5L5.5 .5" fill="none" stroke="#1b3a66" stroke-width="1"/></svg>
<div class="abs" style="left:7.4px;top:67.4px;width:659.0px;height:87.2px;background:#bfbfbf;border-radius:6px;box-shadow:0 0 0 0.8px #3a414a"></div>
<div class="abs" style="left:103.1px;top:72.0px;width:1.2px;height:77.0px;background:#a2a2a2"></div>
<div class="abs" style="left:160.7px;top:72.0px;width:1.2px;height:77.0px;background:#a2a2a2"></div>
<div class="abs" style="left:208.2px;top:72.0px;width:1.2px;height:77.0px;background:#a2a2a2"></div>
<div class="abs" style="left:300.3px;top:72.0px;width:1.2px;height:77.0px;background:#a2a2a2"></div>
<div class="abs" style="left:365.3px;top:72.0px;width:1.2px;height:77.0px;background:#a2a2a2"></div>
<div class="abs" style="left:424.1px;top:72.0px;width:1.2px;height:77.0px;background:#a2a2a2"></div>
<div class="abs" style="left:508.0px;top:72.0px;width:1.2px;height:77.0px;background:#a2a2a2"></div>
<div class="abs" style="left:558.4px;top:72.0px;width:1.2px;height:77.0px;background:#a2a2a2"></div>
<div class="abs" style="left:608.9px;top:72.0px;width:1.2px;height:77.0px;background:#a2a2a2"></div>
<div class="t" style="left:24.8px;top:107.1px;font-size:10.9px;font-weight:normal;color:#1f1f1f;-webkit-text-stroke:0.25px currentColor;letter-spacing:-0.22px">Einfügen</div>
<div class="t" style="left:110.3px;top:105.6px;font-size:10.9px;font-weight:normal;color:#1f1f1f;-webkit-text-stroke:0.25px currentColor;letter-spacing:-0.22px">Schriftart</div>
<div class="t" style="left:168.6px;top:105.6px;font-size:10.9px;font-weight:normal;color:#1f1f1f;-webkit-text-stroke:0.25px currentColor;letter-spacing:-0.22px">Absatz</div>
<div class="t" style="left:217.5px;top:106.9px;font-size:10.9px;font-weight:normal;color:#1f1f1f;-webkit-text-stroke:0.25px currentColor;letter-spacing:-0.22px">Formatvorlagen</div>
<div class="t" style="left:308.0px;top:105.1px;font-size:10.9px;font-weight:normal;color:#1f1f1f;-webkit-text-stroke:0.25px currentColor;letter-spacing:-0.22px">Bearbeiten</div>
<div class="t" style="left:374.0px;top:106.9px;font-size:10.9px;font-weight:normal;color:#1f1f1f;-webkit-text-stroke:0.25px currentColor;letter-spacing:-0.22px">Diktieren</div>
<div class="t" style="left:433.5px;top:106.9px;font-size:10.9px;font-weight:normal;color:#8c8c8c;-webkit-text-stroke:0.25px currentColor;letter-spacing:-0.22px">Vertraulichkeit</div>
<div class="t" style="left:520.0px;top:106.9px;font-size:10.9px;font-weight:normal;color:#1f1f1f;-webkit-text-stroke:0.25px currentColor;letter-spacing:-0.22px">Editor</div>
<div class="t" style="left:572.0px;top:106.9px;font-size:10.9px;font-weight:normal;color:#1f1f1f;-webkit-text-stroke:0.25px currentColor;letter-spacing:-0.22px">Add-</div>
<div class="t" style="left:576.5px;top:120.6px;font-size:10.9px;font-weight:normal;color:#1f1f1f;-webkit-text-stroke:0.25px currentColor;letter-spacing:-0.22px">Ins</div>
<svg class="abs" style="left:41.5px;top:124.0px;" width="7" height="4.5" viewBox="0 0 7 4.5"><path d="M.7 .7l2.8 2.8L6.3 .7" fill="none" stroke="#333" stroke-width="1.1"/></svg>
<svg class="abs" style="left:127.5px;top:121.0px;" width="7" height="4.5" viewBox="0 0 7 4.5"><path d="M.7 .7l2.8 2.8L6.3 .7" fill="none" stroke="#333" stroke-width="1.1"/></svg>
<svg class="abs" style="left:180.5px;top:121.0px;" width="7" height="4.5" viewBox="0 0 7 4.5"><path d="M.7 .7l2.8 2.8L6.3 .7" fill="none" stroke="#333" stroke-width="1.1"/></svg>
<svg class="abs" style="left:250.5px;top:123.0px;" width="7" height="4.5" viewBox="0 0 7 4.5"><path d="M.7 .7l2.8 2.8L6.3 .7" fill="none" stroke="#333" stroke-width="1.1"/></svg>
<svg class="abs" style="left:328.5px;top:121.0px;" width="7" height="4.5" viewBox="0 0 7 4.5"><path d="M.7 .7l2.8 2.8L6.3 .7" fill="none" stroke="#333" stroke-width="1.1"/></svg>
<svg class="abs" style="left:390.5px;top:123.5px;" width="7" height="4.5" viewBox="0 0 7 4.5"><path d="M.7 .7l2.8 2.8L6.3 .7" fill="none" stroke="#333" stroke-width="1.1"/></svg>
<svg class="abs" style="left:462.5px;top:122.5px;" width="7" height="4.5" viewBox="0 0 7 4.5"><path d="M.7 .7l2.8 2.8L6.3 .7" fill="none" stroke="#999" stroke-width="1.1"/></svg>
<div class="t" style="left:13.4px;top:141.9px;font-size:10.4px;font-weight:normal;color:#1f1f1f;-webkit-text-stroke:0.25px currentColor;letter-spacing:-0.15px">Zwischenablage</div>
<div class="t" style="left:212.8px;top:141.9px;font-size:10.4px;font-weight:normal;color:#1f1f1f;-webkit-text-stroke:0.25px currentColor;letter-spacing:-0.15px">Formatvorlagen</div>
<div class="t" style="left:376.7px;top:141.9px;font-size:10.4px;font-weight:normal;color:#1f1f1f;-webkit-text-stroke:0.25px currentColor;letter-spacing:-0.15px">Sprache</div>
<div class="t" style="left:433.5px;top:141.9px;font-size:10.4px;font-weight:normal;color:#1f1f1f;-webkit-text-stroke:0.25px currentColor;letter-spacing:-0.15px">Vertraulichkeit</div>
<div class="t" style="left:520.0px;top:141.9px;font-size:10.4px;font-weight:normal;color:#1f1f1f;-webkit-text-stroke:0.25px currentColor;letter-spacing:-0.15px">Editor</div>
<div class="t" style="left:567.0px;top:141.9px;font-size:10.4px;font-weight:normal;color:#1f1f1f;-webkit-text-stroke:0.25px currentColor;letter-spacing:-0.15px">Add-Ins</div>
<svg class="abs" style="left:93.0px;top:141.0px;" width="8" height="8" viewBox="0 0 8 8"><g fill="none" stroke="#333" stroke-width="1"><path d="M.5 7.5v-7h7"/><path d="M3 3l4 4M3.8 7.2h3.4V3.8"/></g></svg>
<svg class="abs" style="left:292.5px;top:141.0px;" width="8" height="8" viewBox="0 0 8 8"><g fill="none" stroke="#333" stroke-width="1"><path d="M.5 7.5v-7h7"/><path d="M3 3l4 4M3.8 7.2h3.4V3.8"/></g></svg>
<svg class="abs" style="left:649.0px;top:140.0px;" width="10" height="6" viewBox="0 0 10 6"><path d="M.8 .8l4.2 4.2L9.2 .8" fill="none" stroke="#333" stroke-width="1.2"/></svg>
<svg class="abs" style="left:35.5px;top:74.5px;" width="26" height="28" viewBox="0 0 26 28"><path d="M2 5.5h5.5V4h8V5.5H19V12H11v14H2z" fill="#f0c230" stroke="#555" stroke-width="0.8"/><rect x="4.3" y="7.5" width="12.5" height="17" fill="#dadada"/><path d="M7.5 4 11.5 0.8 15.5 4v3.5h-8z" fill="#fafafa" stroke="#555" stroke-width="0.9"/><rect x="12" y="12" width="13" height="15" rx="1.5" fill="#e8e8e8" stroke="#555" stroke-width="1"/></svg>
<svg class="abs" style="left:76.0px;top:74.5px;" width="10" height="14" viewBox="0 0 10 14"><g fill="none" stroke="#9a9a9a" stroke-width="1"><path d="M1.5 0.5 7 10M8.5 0.5 3 10"/><circle cx="2.5" cy="11.5" r="1.7"/><circle cx="7.5" cy="11.5" r="1.7"/></g></svg>
<svg class="abs" style="left:73.5px;top:96.8px;" width="15" height="15" viewBox="0 0 15 15"><g fill="#e6e6e6" stroke="#999" stroke-width="1"><path d="M1 1h6v10H1z"/><path d="M6 4h5l3 3v7H6z"/></g></svg>
<svg class="abs" style="left:73.0px;top:118.5px;" width="16" height="15" viewBox="0 0 16 15"><path d="M9 7.5 14 2.5a1.3 1.3 0 0 1 1 1L10.5 8.8z" fill="#fff" stroke="#444" stroke-width="0.9"/><path d="M1 10.5 7.5 5.8 11 9.3 6 14.5z" fill="#e0a800" stroke="#444" stroke-width="0.9"/><path d="M2.5 11.5 7 8.5" stroke="#fff" stroke-width="1.3"/></svg>
<svg class="abs" style="left:116.6px;top:73.5px;" width="29" height="26" viewBox="0 0 29 26"><path d="M5.5 17.5 14.5 1 23.5 17.5M9 11.5h11" fill="none" stroke="#2a2a2a" stroke-width="1.2"/><rect x="0.5" y="18.8" width="28" height="7" fill="#1d1d1d"/></svg>
<svg class="abs" style="left:172.0px;top:75.5px;" width="25" height="20" viewBox="0 0 25 20"><g stroke="#4a4a4a" stroke-width="1.2"><path d="M0 1h25M3 6h19M0 11h25M3 16h19"/></g></svg>
<svg class="abs" style="left:242.0px;top:75.5px;" width="27" height="27" viewBox="0 0 27 27"><path d="M1.5 18 8.5 1 15.5 18M4.2 11.8h8.8" fill="none" stroke="#3a3a3a" stroke-width="1.3"/><path d="M11 21.5c1-2.5 2.5-3.5 4-3.8l8.5-10.2 2 1.6-8.3 10.6c-.3 1.6-2.5 3.3-6.2 1.8z" fill="#fff" stroke="#555" stroke-width="0.8"/><path d="M11 21.5c1-2.5 2.5-3.5 4.5-3.6l1.8 1.6c-.5 1.8-2.8 3.4-6.3 2z" fill="#4ba0e8"/></svg>
<svg class="abs" style="left:318.5px;top:73.0px;" width="27" height="26" viewBox="0 0 27 26"><circle cx="16" cy="10" r="9" fill="#e4e4e4" stroke="#3a3a3a" stroke-width="1.2"/><path d="M9.6 16.4 1 25" stroke="#3a3a3a" stroke-width="1.4"/></svg>
<svg class="abs" style="left:386.0px;top:74.0px;" width="17" height="26" viewBox="0 0 17 26"><rect x="4.5" y="0.7" width="8" height="16" rx="4" fill="#a9d1f3" stroke="#3d6d99" stroke-width="1"/><path d="M1 10.5a7.5 7.5 0 0 0 15 0M8.5 18v7" fill="none" stroke="#444" stroke-width="1.2"/></svg>
<svg class="abs" style="left:456.5px;top:73.5px;" width="25" height="26" viewBox="0 0 25 26"><path d="M1.5 5h12l4 4v15h-16z" fill="#e2e2e2" stroke="#b4b4b4" stroke-width="1"/><rect x="14.5" y="0" width="7" height="9" transform="rotate(40 18 4.5)" fill="#e2e2e2" stroke="#b4b4b4" stroke-width="1"/><path d="M6 12l5 5" stroke="#b4b4b4" stroke-width="2.5"/></svg>
<svg class="abs" style="left:519.5px;top:73.5px;" width="29" height="28" viewBox="0 0 29 28"><path d="M2 27 4 18 17 3 22 7 9 22z" fill="#fff" stroke="#1e4fb5" stroke-width="1.3"/><path d="M2 27 4.5 21.5 7.5 24.5z" fill="#1e4fb5"/><path d="M13 6 19 1.5 23 5 19 9" fill="#1e4fb5"/><path d="M14 12h14M12 17h14M10 22h11" stroke="#1e4fb5" stroke-width="2.6"/></svg>
<svg class="abs" style="left:571.5px;top:74.5px;" width="26" height="26" viewBox="0 0 26 26"><rect x="1" y="1" width="24" height="24" rx="1.5" fill="#cfdbe6" stroke="#d4552c" stroke-width="1.7"/><g fill="#d5e3ee" stroke="#d4552c" stroke-width="1.4"><rect x="4" y="4" width="8" height="8"/><rect x="14" y="4" width="8" height="8"/><rect x="4" y="14" width="8" height="8"/><rect x="14" y="14" width="8" height="8"/></g></svg>
<div class="abs" id="page" style="left:19px;top:168px;width:620px;height:563px;background:#fff;overflow:hidden">
<div class="abs" style="left:44.0px;top:29.8px;width:531.5px;height:187.0px;border:1px solid #8a8a8a"></div>
<div class="t" style="left:58.6px;top:43.4px;font-size:10.5px;font-weight:bold;color:#f0504f;">ENTWURF / PRELIMINARY</div>
<div class="t" style="left:234.4px;top:49.5px;font-size:10.3px;font-weight:bold;color:#5a5a5a;">Spezifikation / <span class="sq">Specification</span></div>
<div class="t" style="left:410.0px;top:43.4px;font-size:10.4px;font-weight:normal;color:#5a5a5a;"><span class="sq">Dok.</span>/Doc:</div>
<div class="t" style="left:410.0px;top:56.0px;font-size:10.4px;font-weight:normal;color:#5a5a5a;">Version:</div>
<div class="t" style="left:492.5px;top:43.5px;font-size:10.3px;font-weight:normal;color:#5a5a5a;">1013994</div>
<div class="t" style="left:492.5px;top:56.1px;font-size:10.3px;font-weight:normal;color:#5a5a5a;">01</div>
<div class="t" style="left:105.4px;top:103.0px;font-size:17px;font-weight:normal;color:#5a5a5a;letter-spacing:-0.1px"><span class="sq">Specification</span> <b>Tube 12*230 mm</b></div>
<div class="t" style="left:412.8px;top:92.5px;font-size:10.3px;font-weight:normal;color:#5a5a5a;">Seite <b>1</b> von <b>1</b></div>
<div class="t" style="left:412.8px;top:116.6px;font-size:10.3px;font-weight:normal;color:#5a5a5a;">Page <b>1</b> &nbsp;<span class="sq">of</span> &nbsp;<b>1</b></div>
<div class="t" style="left:168.6px;top:147.7px;font-size:10.3px;font-weight:normal;color:#5a5a5a;">Date/Date</div>
<div class="t" style="left:249.6px;top:147.7px;font-size:10.3px;font-weight:normal;color:#5a5a5a;">Name</div>
<div class="t" style="left:404.4px;top:147.7px;font-size:10.3px;font-weight:normal;color:#5a5a5a;">Position</div>
<div class="t" style="left:49.6px;top:164.7px;font-size:10.5px;font-weight:normal;color:#5a5a5a;">Angelegt/<span class="sq">Created</span></div>
<div class="t" style="left:168.6px;top:164.7px;font-size:10.5px;font-weight:bold;color:#5a5a5a;">11.01.2022</div>
<div class="t" style="left:249.6px;top:164.7px;font-size:10.5px;font-weight:bold;color:#5a5a5a;">HMANN</div>
<div class="t" style="left:404.4px;top:164.7px;font-size:10.4px;font-weight:normal;color:#5a5a5a;">Sachbearbeiter / Official</div>
<div class="t" style="left:49.6px;top:181.8px;font-size:10.5px;font-weight:normal;color:#5a5a5a;"><span class="sq">Sachbearb.</span>/Approved</div>
<div class="t" style="left:404.4px;top:181.8px;font-size:10.4px;font-weight:normal;color:#5a5a5a;">Sachbearbeiter <span class="bq">/ &nbsp;Official</span></div>
<div class="t" style="left:49.6px;top:196.0px;font-size:10.5px;font-weight:normal;color:#5a5a5a;">Freigegeben/<span class="sq">Released</span></div>
<div class="t" style="left:404.4px;top:200.2px;font-size:10.45px;font-weight:normal;color:#5a5a5a;"><span class="sq">Ltg.</span> Konstruktion / <span class="sq">Techn.Manager</span></div>
<div class="abs" style="left:73.8px;top:240.6px;width:1.3px;height:18.6px;background:#111"></div>
<div class="t" style="left:74.4px;top:262.4px;font-size:16px;font-weight:normal;color:#111;letter-spacing:-0.25px">Werkstoff / Materials</div>
<div class="t" style="left:103.5px;top:306.7px;font-size:10.45px;font-weight:bold;color:#111;">NUMMER / ID</div>
<div class="t" style="left:250.7px;top:306.7px;font-size:10.45px;font-weight:bold;color:#111;">DIN</div>
<div class="t" style="left:366.3px;top:306.7px;font-size:10.45px;font-weight:bold;color:#111;">AISI</div>
<div class="t" style="left:480.6px;top:304.5px;font-size:10.45px;font-weight:bold;color:#111;">UNS</div>
<div class="abs" style="left:73.8px;top:321.3px;width:123.0px;height:16.6px;background:#efefef"></div>
<div class="abs" style="left:201.2px;top:321.3px;width:345.7px;height:16.6px;background:#efefef"></div>
<div class="abs" style="left:73.8px;top:356.8px;width:123.0px;height:16.6px;background:#efefef"></div>
<div class="abs" style="left:201.2px;top:356.8px;width:345.7px;height:16.6px;background:#efefef"></div>
<div class="abs" style="left:73.8px;top:320.0px;width:473.2px;height:1.3px;background:#858585"></div>
<div class="abs" style="left:198.5px;top:320.5px;width:1.3px;height:70.0px;background:#8a8a8a"></div>
<div class="t" style="left:119.5px;top:325.9px;font-size:10.5px;font-weight:bold;color:#111;">1.4306</div>
<div class="t" style="left:227.0px;top:325.8px;font-size:11px;font-weight:normal;color:#111;">X2CrNi19-11</div>
<div class="t" style="left:363.0px;top:325.9px;font-size:10.8px;font-weight:normal;color:#111;">304 L</div>
<div class="t" style="left:471.5px;top:322.7px;font-size:10.8px;font-weight:normal;color:#111;">S 30403</div>
<div class="t" style="left:119.5px;top:342.9px;font-size:10.5px;font-weight:bold;color:#111;">1.4301</div>
<div class="t" style="left:227.0px;top:342.8px;font-size:11px;font-weight:normal;color:#111;">X5CrNi18-10</div>
<div class="t" style="left:366.0px;top:342.9px;font-size:10.8px;font-weight:normal;color:#111;">304</div>
<div class="t" style="left:471.5px;top:339.7px;font-size:10.8px;font-weight:normal;color:#111;">S 30400</div>
<div class="t" style="left:74.4px;top:431.7px;font-size:16px;font-weight:normal;color:#111;letter-spacing:-0.1px">Abmessungen / <span class="sq">Measures</span></div>
<div class="t" style="left:123.0px;top:477.5px;font-size:10.4px;font-weight:bold;color:#111;">DIMENSION</div>
<div class="t" style="left:269.2px;top:477.5px;font-size:10.35px;font-weight:bold;color:#111;"><span class="sq">MAß</span> / MEASURE</div>
<div class="t" style="left:430.6px;top:477.5px;font-size:10.4px;font-weight:bold;color:#111;">EINHEIT / UNIT</div>
<div class="abs" style="left:74.4px;top:494.3px;width:153.6px;height:19.6px;background:#efefef"></div>
<div class="abs" style="left:232.2px;top:494.3px;width:313.0px;height:19.6px;background:#efefef"></div>
<div class="abs" style="left:74.4px;top:534.7px;width:153.6px;height:19.9px;background:#efefef"></div>
<div class="abs" style="left:232.2px;top:534.7px;width:313.0px;height:19.9px;background:#efefef"></div>
<div class="abs" style="left:74.4px;top:492.6px;width:470.6px;height:1.3px;background:#858585"></div>
<div class="abs" style="left:229.9px;top:493.2px;width:1.3px;height:80.0px;background:#8a8a8a"></div>
<div class="t" style="left:80.0px;top:499.8px;font-size:10.4px;font-weight:bold;color:#111;">DURCHMESSER / DIAMETER</div>
<div class="t" style="left:304.0px;top:499.8px;font-size:10.5px;font-weight:bold;color:#111;">12</div>
<div class="t" style="left:459.4px;top:499.8px;font-size:10.8px;font-weight:bold;color:#111;letter-spacing:-0.2px">mm</div>
<div class="t" style="left:113.8px;top:518.2px;font-size:10.4px;font-weight:bold;color:#111;">HÖHE / HEIGHT</div>
<div class="t" style="left:302.0px;top:518.2px;font-size:10.5px;font-weight:bold;color:#111;">230</div>
<div class="t" style="left:459.4px;top:518.2px;font-size:10.8px;font-weight:bold;color:#111;letter-spacing:-0.2px">mm</div>
<div class="t" style="left:111.5px;top:539.7px;font-size:10.4px;font-weight:bold;color:#111;">BREITE / WIDTH</div>
<div class="t" style="left:302.0px;top:539.7px;font-size:10.5px;font-weight:bold;color:#111;">470</div>
<div class="t" style="left:459.4px;top:539.7px;font-size:10.8px;font-weight:bold;color:#111;letter-spacing:-0.2px">mm</div>
<div class="t" style="left:109.0px;top:559.5px;font-size:10.4px;font-weight:bold;color:#111;">LÄNGE / LENGTH</div>
<div class="t" style="left:302.0px;top:559.5px;font-size:10.5px;font-weight:bold;color:#111;">400</div>
</div>
<div class="abs" style="left:659.3px;top:155.5px;width:13.3px;height:574.0px;background:#383838;border-radius:7px"></div>
<svg class="abs" style="left:661.8px;top:159.0px;" width="9" height="6.5" viewBox="0 0 9 6.5"><path d="M4.5 .5 8.5 6H.5z" fill="#d9d9d9"/></svg>
<div class="abs" style="left:662.0px;top:169.0px;width:8.2px;height:349.0px;background:#c9c9c9;border-radius:4px"></div>
<svg class="abs" style="left:661.8px;top:720.3px;" width="9" height="6.5" viewBox="0 0 9 6.5"><path d="M4.5 6 8.5 .5H.5z" fill="#d9d9d9"/></svg>
<div class="abs" style="left:0.0px;top:732.0px;width:674.0px;height:18.0px;background:#4f4f4f"></div>
<div class="abs" style="left:0.0px;top:731.0px;width:674.0px;height:1.3px;background:#3b3b3b"></div>
<div class="t" style="left:10.2px;top:735.7px;font-size:10.5px;font-weight:normal;color:#f2f2f2;-webkit-text-stroke:0.25px currentColor;letter-spacing:-0.35px">Seite 1 von 1</div>
<div class="t" style="left:84.0px;top:735.7px;font-size:10.5px;font-weight:normal;color:#f2f2f2;-webkit-text-stroke:0.25px currentColor;letter-spacing:-0.25px">67 Wörter</div>
<svg class="abs" style="left:145.0px;top:735.5px;" width="13" height="12" viewBox="0 0 13 12"><g fill="none" stroke="#f2f2f2" stroke-width="1.25"><path d="M5.5 1H1v10h5M6 1h5v4"/><path d="M7 7l4.5 4.5M11.5 7 7 11.5"/></g></svg>
<div class="t" style="left:174.6px;top:735.7px;font-size:10.5px;font-weight:normal;color:#f2f2f2;-webkit-text-stroke:0.25px currentColor;letter-spacing:-0.25px">Textvorhersagen: ein</div>
<svg class="abs" style="left:347.0px;top:735.0px;" width="13" height="12" viewBox="0 0 13 12"><g fill="none" stroke="#f2f2f2" stroke-width="1.25"><path d="M3 .8H1.2v10.4H3M10 .8h1.8v10.4H10"/><path d="M4 2.5h4l1.5 1.5v5.5H4z"/></g></svg>
<div class="t" style="left:361.5px;top:735.7px;font-size:10.5px;font-weight:normal;color:#f2f2f2;-webkit-text-stroke:0.25px currentColor;letter-spacing:-0.2px">Fokus</div>
<svg class="abs" style="left:410.0px;top:735.5px;" width="13" height="11" viewBox="0 0 13 11"><g fill="none" stroke="#f2f2f2" stroke-width="1.25"><path d="M6.5 2C5 1 2.5 1 .8 1.5v9c1.7-.5 4.2-.5 5.7.5 1.5-1 4-1 5.7-.5v-9C10.5 1 8 1 6.5 2zM6.5 2v9"/></g></svg>
<div class="abs" style="left:434.3px;top:732.3px;width:34.7px;height:17.5px;background:#5a5a5a"></div>
<svg class="abs" style="left:446.0px;top:735.0px;" width="12" height="12" viewBox="0 0 12 12"><g fill="none" stroke="#f2f2f2" stroke-width="1.25"><rect x=".8" y=".8" width="10" height="10.5"/><path d="M3 3.5h5.5M3 5.5h5.5M3 7.5h5.5"/></g></svg>
<svg class="abs" style="left:480.5px;top:735.0px;" width="14" height="12" viewBox="0 0 14 12"><g fill="none" stroke="#f2f2f2" stroke-width="1.25"><path d="M6.5 11H.8V.8h10.5v4"/><path d="M.8 3h10.5"/><circle cx="10" cy="8.5" r="3"/><path d="M7 8.5h6M10 5.5v6"/></g></svg>
<div class="abs" style="left:510.0px;top:740.5px;width:5.5px;height:1.0px;background:#f2f2f2"></div>
<div class="abs" style="left:520.0px;top:740.5px;width:87.0px;height:1.0px;background:#b8b8b8"></div>
<div class="abs" style="left:558.6px;top:735.5px;width:4.2px;height:10.0px;background:#dcdcdc;border-radius:1px"></div>
<div class="abs" style="left:564.0px;top:737.5px;width:1.0px;height:6.0px;background:#b8b8b8"></div>
<div class="abs" style="left:613.0px;top:740.5px;width:7.0px;height:1.0px;background:#f2f2f2"></div>
<div class="abs" style="left:616.0px;top:737.0px;width:1.0px;height:7.0px;background:#f2f2f2"></div>
<div class="t" style="left:630.0px;top:735.7px;font-size:10.5px;font-weight:normal;color:#f2f2f2;-webkit-text-stroke:0.25px currentColor;letter-spacing:-0.5px">90 %</div>
</div>
</body></html>
